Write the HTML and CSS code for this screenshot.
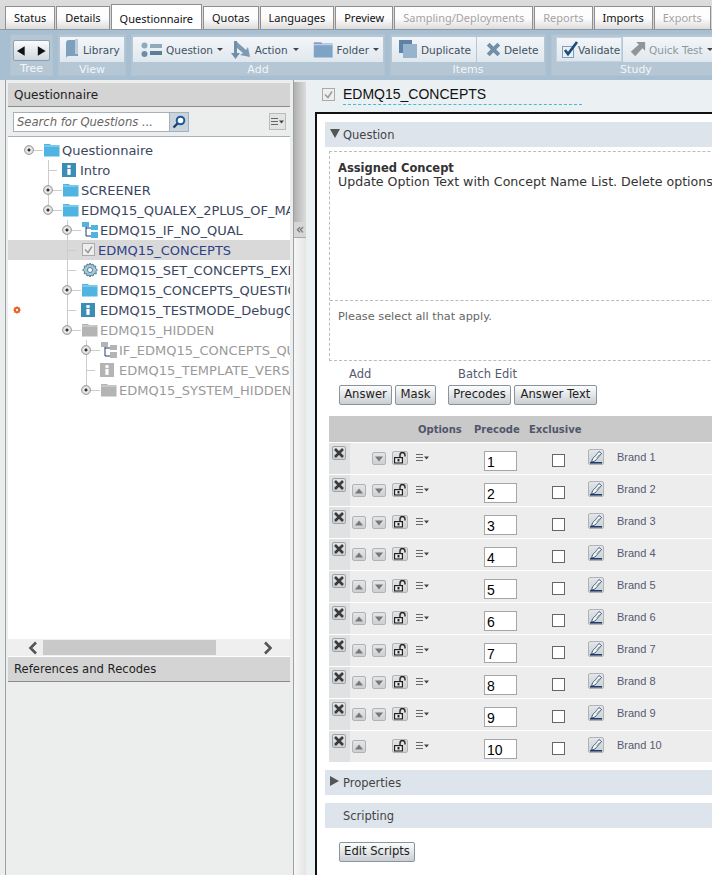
FILE: index.html
```html
<!DOCTYPE html>
<html lang="en">
<head>
    <meta charset="UTF-8">
    <meta name="viewport" content="width=device-width, initial-scale=1.0">
    <title>Questionnaire</title>
    <link rel="stylesheet" href="styles.css">
</head>
<body>
    <svg class="sprite" aria-hidden="true">
        <symbol id="i-folder" viewBox="0 0 16 14"><path d="M0 2V1h6l1 1h8.500v11.500H0z" fill="currentColor"/><path d="M0 3h15.500" stroke="#fff" stroke-opacity=".5"/></symbol>
        <symbol id="i-info" viewBox="0 0 13 13"><rect width="13" height="13" fill="currentColor"/><rect x="5" y="2" width="3" height="2.500" fill="#fff"/><rect x="5" y="5.500" width="3" height="5.500" fill="#fff"/></symbol>
        <symbol id="i-branch" viewBox="0 0 16 16"><path d="M0 0h7v5H0z" fill="currentColor"/><path d="M9 3h7v5H9zM9 10h7v6H9z" fill="currentColor"/><path d="M4 5v9h5M4 6h5" fill="none" stroke="#223a66"/></symbol>
        <symbol id="i-check" viewBox="0 0 14 14"><rect x=".5" y=".5" width="12" height="12" fill="#eee" stroke="#aaa"/><path d="M3 6.500l3 3 4-6" fill="none" stroke="#999" stroke-width="1.500"/></symbol>
        <symbol id="i-gear" viewBox="0 0 16 16"><path d="M8 1l1 2 2-1 .5 2.200 2.300-.2-.4 2.300L15.500 8l-1.600 1.500.4 2.300-2.300-.2L11 14l-2-1-1 2-1-2-2 1-.5-2.400-2.300.2.400-2.300L.5 8l2.100-1.700-.4-2.300 2.300.2L5 2l2 1z" fill="#a9c6d4" stroke="#4f7f96"/><circle cx="8" cy="8" r="2.500" fill="#fff" stroke="#4f7f96"/></symbol>
        <symbol id="i-up" viewBox="0 0 12 10"><path d="M2 7.500L6 2.500l4 5z" fill="#777"/></symbol>
        <symbol id="i-down" viewBox="0 0 12 10"><path d="M2 2.500L6 7.500l4-5z" fill="#777"/></symbol>
        <symbol id="i-lock" viewBox="0 0 14 12"><path d="M7 5V3a2.500 2.500 0 0 1 5 0v1.500" fill="none" stroke="#222" stroke-width="1.400"/><rect x="1" y="5" width="9" height="6.500" fill="#222"/><rect x="2.200" y="6.200" width="6.600" height="4.200" fill="#f4f4f4"/><rect x="4.500" y="7" width="2" height="2.500" fill="#222"/></symbol>
        <symbol id="i-menu" viewBox="0 0 13 10"><path d="M0 1.500h7M0 4.500h7M0 7.500h7" stroke="#666"/><path d="M8 3.500h5L10.500 6.500z" fill="#444"/></symbol>
        <symbol id="i-edit" viewBox="0 0 14 14"><path d="M3.500 9L10 1.500l2.500 2-6.500 7.500-3.500 1z" fill="#fff" stroke="#3f5f80"/><path d="M6 6.500l3-3.500M7.500 8l3-3.500" stroke="#8aa3b8"/><path d="M1 12.800h12" stroke="#17375e" stroke-width="1.500"/></symbol>
        <symbol id="i-x" viewBox="0 0 12 12"><path d="M2 2l8 8M10 2l-8 8" stroke="#3a3a3a" stroke-width="2.600"/></symbol>
        <symbol id="i-flag" viewBox="0 0 8 8"><path d="M4 0l1 1.200L6.800 1.200 6.800 3 8 4 6.800 5 6.800 6.800 5 6.800 4 8 3 6.800 1.200 6.800 1.200 5 0 4 1.200 3 1.200 1.200 3 1.200z" fill="#f0591c"/><circle cx="4" cy="4" r="1.200" fill="#fff"/></symbol>
    </svg>

    <nav class="tabs">
        <div class="tab">Status</div>
        <div class="tab">Details</div>
        <div class="tab active">Questionnaire</div>
        <div class="tab">Quotas</div>
        <div class="tab">Languages</div>
        <div class="tab">Preview</div>
        <div class="tab off">Sampling/Deployments</div>
        <div class="tab off">Reports</div>
        <div class="tab">Imports</div>
        <div class="tab off">Exports</div>
        <div class="tab off tab-last"></div>
    </nav>

    <div class="toolbar">
        <div class="group group-tree">
            <div class="tools">
                <div class="arrows">
                    <svg width="18" height="12" viewBox="0 0 18 12"><path d="M11 1v10L3 6z" fill="#111"/></svg>
                    <svg width="18" height="12" viewBox="0 0 18 12"><path d="M6 1v10l8-5z" fill="#111"/></svg>
                </div>
            </div>
            <div class="group-label">Tree</div>
        </div>
        <div class="group group-view">
            <div class="tools">
                <div class="tool">
                    <svg width="14" height="21" viewBox="0 0 14 21"><path d="M3 1h9v16H3q-3 0-3 3V4q0-3 3-3z" fill="#7ea0bd"/><path d="M9 0h3v15H9z" fill="#b9cddd"/></svg>
                    <span>Library</span>
                </div>
            </div>
            <div class="group-label">View</div>
        </div>
        <div class="group group-add">
            <div class="tools">
                <div class="tool tool-q">
                    <svg width="22" height="16" viewBox="0 0 22 16"><circle cx="3.500" cy="3.500" r="3" fill="#8fa9bf"/><circle cx="3.500" cy="12" r="3" fill="#6f8ca6"/><rect x="9" y="2" width="12" height="4" fill="#8fa9bf"/><rect x="9" y="9" width="12" height="4" fill="#5d7d99"/></svg>
                    <span>Question</span><i class="caret"></i>
                </div>
                <div class="tool tool-a">
                    <svg width="20" height="20" viewBox="0 0 20 20"><path d="M3 1h3v12h3l-4.500 6L0 13h3z" fill="#6f8fab"/><path d="M6 2l9 8 2-3 2 10-10-2 3-2-6-5z" fill="#7d9ab3"/></svg>
                    <span>Action</span><i class="caret"></i>
                </div>
                <div class="tool tool-f">
                    <svg class="tool-folder" width="21" height="17"><use href="#i-folder"/></svg>
                    <span>Folder</span><i class="caret"></i>
                </div>
            </div>
            <div class="group-label">Add</div>
        </div>
        <div class="group group-items">
            <div class="tools">
                <div class="tool tool-dup">
                    <svg width="19" height="19" viewBox="0 0 19 19"><rect x="0" y="0" width="13" height="13" fill="#5d84a8"/><rect x="4" y="4" width="14" height="14" fill="#97b4cc"/></svg>
                    <span>Duplicate</span>
                </div>
                <div class="tool tool-del">
                    <svg width="15" height="15" viewBox="0 0 17 17"><path d="M2.500 2.500l12 12M14.500 2.500l-12 12" stroke="#6f8fab" stroke-width="4.500"/></svg>
                    <span>Delete</span>
                </div>
            </div>
            <div class="group-label">Items</div>
        </div>
        <div class="group group-study">
            <div class="tools">
                <div class="tool tool-val">
                    <svg width="19" height="19" viewBox="0 0 19 19"><rect x="1.500" y="6.500" width="11" height="11" fill="#e8eff5" stroke="#7f9db7"/><path d="M4 10l3 4 9-12" fill="none" stroke="#1e4a7a" stroke-width="2.600"/></svg>
                    <span>Validate</span>
                </div>
                <div class="tool tool-off">
                    <svg width="17" height="17" viewBox="0 0 19 19"><path d="M8 1h10v10l-3-3-8 9-5-5 9-8z" fill="#8f9599"/></svg>
                    <span>Quick Test</span><i class="caret"></i>
                </div>
            </div>
            <div class="group-label">Study</div>
        </div>
    </div>

    <div class="main">
        <aside class="side">
            <div class="side-head">Questionnaire</div>
            <div class="search-row">
                <div class="search">
                    <div class="search-text">Search for Questions ...</div>
                    <div class="search-btn">
                        <svg width="14" height="14" viewBox="0 0 14 14"><circle cx="8.500" cy="5.500" r="3.800" fill="#fff" stroke="#1d5a9a" stroke-width="2"/><path d="M5.500 8.500L1.500 12.500" stroke="#1d3f6a" stroke-width="2.400"/></svg>
                    </div>
                </div>
                <div class="mini-menu"><svg width="13" height="10"><use href="#i-menu"/></svg></div>
            </div>
            <div class="tree">
                <div class="node lvl0"><i class="twist"></i><i class="dash"></i><svg class="ico blue" width="16" height="14"><use href="#i-folder"/></svg><span>Questionnaire</span></div>
                <div class="node lvl1 guide1"><i class="nest"></i><i class="dash"></i><svg class="ico info teal" width="14" height="14"><use href="#i-info"/></svg><span>Intro</span></div>
                <div class="node lvl1 guide1"><i class="twist"></i><i class="dash"></i><svg class="ico blue" width="16" height="14"><use href="#i-folder"/></svg><span>SCREENER</span></div>
                <div class="node lvl1 guide1-end"><i class="twist"></i><i class="dash"></i><svg class="ico blue" width="16" height="14"><use href="#i-folder"/></svg><span>EDMQ15_QUALEX_2PLUS_OF_MAIN</span></div>
                <div class="node lvl2 guide2"><i class="twist"></i><i class="dash"></i><svg class="ico blue" width="16" height="16"><use href="#i-branch"/></svg><span>EDMQ15_IF_NO_QUAL</span></div>
                <div class="node lvl2 guide2 selected"><i class="nest"></i><i class="dash"></i><svg class="ico" width="14" height="14"><use href="#i-check"/></svg><span>EDMQ15_CONCEPTS</span></div>
                <div class="node lvl2 guide2"><i class="nest"></i><i class="dash"></i><svg class="ico" width="16" height="16"><use href="#i-gear"/></svg><span>EDMQ15_SET_CONCEPTS_EXEC</span></div>
                <div class="node lvl2 guide2"><i class="twist"></i><i class="dash"></i><svg class="ico blue" width="16" height="14"><use href="#i-folder"/></svg><span>EDMQ15_CONCEPTS_QUESTIONS</span></div>
                <div class="node lvl2 guide2"><svg class="flag" width="8" height="8"><use href="#i-flag"/></svg><i class="nest"></i><i class="dash"></i><svg class="ico info teal" width="14" height="14"><use href="#i-info"/></svg><span>EDMQ15_TESTMODE_DebugCheck</span></div>
                <div class="node lvl2 guide2-end muted"><i class="twist"></i><i class="dash"></i><svg class="ico grey" width="16" height="14"><use href="#i-folder"/></svg><span>EDMQ15_HIDDEN</span></div>
                <div class="node lvl3 guide3 muted"><i class="twist"></i><i class="dash"></i><svg class="ico grey" width="16" height="16"><use href="#i-branch"/></svg><span>IF_EDMQ15_CONCEPTS_QUESTION</span></div>
                <div class="node lvl3 guide3 muted"><i class="nest"></i><i class="dash"></i><svg class="ico info grey" width="14" height="14"><use href="#i-info"/></svg><span>EDMQ15_TEMPLATE_VERSION</span></div>
                <div class="node lvl3 guide3-end muted"><i class="twist"></i><i class="dash"></i><svg class="ico grey" width="16" height="14"><use href="#i-folder"/></svg><span>EDMQ15_SYSTEM_HIDDEN</span></div>
            </div>
            <div class="hscroll">
                <svg width="12" height="14" viewBox="0 0 12 14"><path d="M9 1.500L3.500 7 9 12.500" fill="none" stroke="#555" stroke-width="2.600"/></svg>
                <div class="hscroll-track"><div class="hscroll-thumb"></div></div>
                <svg width="12" height="14" viewBox="0 0 12 14"><path d="M3 1.500L8.500 7 3 12.500" fill="none" stroke="#555" stroke-width="2.600"/></svg>
            </div>
            <div class="side-head side-refs">References and Recodes</div>
        </aside>

        <div class="splitter">
            <div class="split-top"></div>
            <div class="split-btn">«</div>
            <div class="split-rest"></div>
        </div>

        <section class="content">
            <div class="title-row">
                <svg width="14" height="14"><use href="#i-check"/></svg>
                <div class="title">EDMQ15_CONCEPTS</div>
            </div>
            <div class="panel">
                <div class="bar"><i class="tri-down"></i>Question</div>
                <div class="qbox">
                    <div class="qtext">
                        <b>Assigned Concept</b><br>
                        Update Option Text with Concept Name List. Delete options
                    </div>
                    <div class="qhint">Please select all that apply.</div>
                </div>

                <div class="btn-labels">
                    <span class="lbl-add">Add</span>
                    <span class="lbl-batch">Batch Edit</span>
                </div>
                <div class="btn-row">
                    <div class="btn btn-answer">Answer</div>
                    <div class="btn btn-mask">Mask</div>
                    <div class="btn btn-precodes">Precodes</div>
                    <div class="btn btn-text">Answer Text</div>
                </div>

                <div class="grid-head">
                    <span class="h-options">Options</span>
                    <span class="h-precode">Precode</span>
                    <span>Exclusive</span>
                </div>

                <div class="row">
                    <div class="cell-del"><div class="ibtn btn-x"><svg width="12" height="12"><use href="#i-x"/></svg></div></div>
                    <div class="slot"></div>
                    <div class="slot"><div class="ibtn"><svg width="12" height="10"><use href="#i-down"/></svg></div></div>
                    <div class="slot-lock"><div class="ibtn"><svg width="14" height="12"><use href="#i-lock"/></svg></div></div>
                    <div class="slot-menu"><svg width="13" height="10"><use href="#i-menu"/></svg></div>
                    <div class="precode">1</div>
                    <div class="check"></div>
                    <div class="slot-edit"><div class="ibtn"><svg width="14" height="14"><use href="#i-edit"/></svg></div></div>
                    <div class="brand">Brand 1</div>
                </div>
                <div class="row">
                    <div class="cell-del"><div class="ibtn btn-x"><svg width="12" height="12"><use href="#i-x"/></svg></div></div>
                    <div class="slot"><div class="ibtn"><svg width="12" height="10"><use href="#i-up"/></svg></div></div>
                    <div class="slot"><div class="ibtn"><svg width="12" height="10"><use href="#i-down"/></svg></div></div>
                    <div class="slot-lock"><div class="ibtn"><svg width="14" height="12"><use href="#i-lock"/></svg></div></div>
                    <div class="slot-menu"><svg width="13" height="10"><use href="#i-menu"/></svg></div>
                    <div class="precode">2</div>
                    <div class="check"></div>
                    <div class="slot-edit"><div class="ibtn"><svg width="14" height="14"><use href="#i-edit"/></svg></div></div>
                    <div class="brand">Brand 2</div>
                </div>
                <div class="row">
                    <div class="cell-del"><div class="ibtn btn-x"><svg width="12" height="12"><use href="#i-x"/></svg></div></div>
                    <div class="slot"><div class="ibtn"><svg width="12" height="10"><use href="#i-up"/></svg></div></div>
                    <div class="slot"><div class="ibtn"><svg width="12" height="10"><use href="#i-down"/></svg></div></div>
                    <div class="slot-lock"><div class="ibtn"><svg width="14" height="12"><use href="#i-lock"/></svg></div></div>
                    <div class="slot-menu"><svg width="13" height="10"><use href="#i-menu"/></svg></div>
                    <div class="precode">3</div>
                    <div class="check"></div>
                    <div class="slot-edit"><div class="ibtn"><svg width="14" height="14"><use href="#i-edit"/></svg></div></div>
                    <div class="brand">Brand 3</div>
                </div>
                <div class="row">
                    <div class="cell-del"><div class="ibtn btn-x"><svg width="12" height="12"><use href="#i-x"/></svg></div></div>
                    <div class="slot"><div class="ibtn"><svg width="12" height="10"><use href="#i-up"/></svg></div></div>
                    <div class="slot"><div class="ibtn"><svg width="12" height="10"><use href="#i-down"/></svg></div></div>
                    <div class="slot-lock"><div class="ibtn"><svg width="14" height="12"><use href="#i-lock"/></svg></div></div>
                    <div class="slot-menu"><svg width="13" height="10"><use href="#i-menu"/></svg></div>
                    <div class="precode">4</div>
                    <div class="check"></div>
                    <div class="slot-edit"><div class="ibtn"><svg width="14" height="14"><use href="#i-edit"/></svg></div></div>
                    <div class="brand">Brand 4</div>
                </div>
                <div class="row">
                    <div class="cell-del"><div class="ibtn btn-x"><svg width="12" height="12"><use href="#i-x"/></svg></div></div>
                    <div class="slot"><div class="ibtn"><svg width="12" height="10"><use href="#i-up"/></svg></div></div>
                    <div class="slot"><div class="ibtn"><svg width="12" height="10"><use href="#i-down"/></svg></div></div>
                    <div class="slot-lock"><div class="ibtn"><svg width="14" height="12"><use href="#i-lock"/></svg></div></div>
                    <div class="slot-menu"><svg width="13" height="10"><use href="#i-menu"/></svg></div>
                    <div class="precode">5</div>
                    <div class="check"></div>
                    <div class="slot-edit"><div class="ibtn"><svg width="14" height="14"><use href="#i-edit"/></svg></div></div>
                    <div class="brand">Brand 5</div>
                </div>
                <div class="row">
                    <div class="cell-del"><div class="ibtn btn-x"><svg width="12" height="12"><use href="#i-x"/></svg></div></div>
                    <div class="slot"><div class="ibtn"><svg width="12" height="10"><use href="#i-up"/></svg></div></div>
                    <div class="slot"><div class="ibtn"><svg width="12" height="10"><use href="#i-down"/></svg></div></div>
                    <div class="slot-lock"><div class="ibtn"><svg width="14" height="12"><use href="#i-lock"/></svg></div></div>
                    <div class="slot-menu"><svg width="13" height="10"><use href="#i-menu"/></svg></div>
                    <div class="precode">6</div>
                    <div class="check"></div>
                    <div class="slot-edit"><div class="ibtn"><svg width="14" height="14"><use href="#i-edit"/></svg></div></div>
                    <div class="brand">Brand 6</div>
                </div>
                <div class="row">
                    <div class="cell-del"><div class="ibtn btn-x"><svg width="12" height="12"><use href="#i-x"/></svg></div></div>
                    <div class="slot"><div class="ibtn"><svg width="12" height="10"><use href="#i-up"/></svg></div></div>
                    <div class="slot"><div class="ibtn"><svg width="12" height="10"><use href="#i-down"/></svg></div></div>
                    <div class="slot-lock"><div class="ibtn"><svg width="14" height="12"><use href="#i-lock"/></svg></div></div>
                    <div class="slot-menu"><svg width="13" height="10"><use href="#i-menu"/></svg></div>
                    <div class="precode">7</div>
                    <div class="check"></div>
                    <div class="slot-edit"><div class="ibtn"><svg width="14" height="14"><use href="#i-edit"/></svg></div></div>
                    <div class="brand">Brand 7</div>
                </div>
                <div class="row">
                    <div class="cell-del"><div class="ibtn btn-x"><svg width="12" height="12"><use href="#i-x"/></svg></div></div>
                    <div class="slot"><div class="ibtn"><svg width="12" height="10"><use href="#i-up"/></svg></div></div>
                    <div class="slot"><div class="ibtn"><svg width="12" height="10"><use href="#i-down"/></svg></div></div>
                    <div class="slot-lock"><div class="ibtn"><svg width="14" height="12"><use href="#i-lock"/></svg></div></div>
                    <div class="slot-menu"><svg width="13" height="10"><use href="#i-menu"/></svg></div>
                    <div class="precode">8</div>
                    <div class="check"></div>
                    <div class="slot-edit"><div class="ibtn"><svg width="14" height="14"><use href="#i-edit"/></svg></div></div>
                    <div class="brand">Brand 8</div>
                </div>
                <div class="row">
                    <div class="cell-del"><div class="ibtn btn-x"><svg width="12" height="12"><use href="#i-x"/></svg></div></div>
                    <div class="slot"><div class="ibtn"><svg width="12" height="10"><use href="#i-up"/></svg></div></div>
                    <div class="slot"><div class="ibtn"><svg width="12" height="10"><use href="#i-down"/></svg></div></div>
                    <div class="slot-lock"><div class="ibtn"><svg width="14" height="12"><use href="#i-lock"/></svg></div></div>
                    <div class="slot-menu"><svg width="13" height="10"><use href="#i-menu"/></svg></div>
                    <div class="precode">9</div>
                    <div class="check"></div>
                    <div class="slot-edit"><div class="ibtn"><svg width="14" height="14"><use href="#i-edit"/></svg></div></div>
                    <div class="brand">Brand 9</div>
                </div>
                <div class="row">
                    <div class="cell-del"><div class="ibtn btn-x"><svg width="12" height="12"><use href="#i-x"/></svg></div></div>
                    <div class="slot"><div class="ibtn"><svg width="12" height="10"><use href="#i-up"/></svg></div></div>
                    <div class="slot"></div>
                    <div class="slot-lock"><div class="ibtn"><svg width="14" height="12"><use href="#i-lock"/></svg></div></div>
                    <div class="slot-menu"><svg width="13" height="10"><use href="#i-menu"/></svg></div>
                    <div class="precode">10</div>
                    <div class="check"></div>
                    <div class="slot-edit"><div class="ibtn"><svg width="14" height="14"><use href="#i-edit"/></svg></div></div>
                    <div class="brand">Brand 10</div>
                </div>

                <div class="bar bar-props"><i class="tri-right"></i>Properties</div>
                <div class="bar bar-script">Scripting</div>
                <div class="btn btn-scripts">Edit Scripts</div>
            </div>
        </section>
    </div>
</body>
</html>
```

FILE: styles.css
```css
* {
    box-sizing: border-box;
}

html, body {
    margin: 0;
    height: 875px;
    overflow: hidden;
}

body {
    display: flex;
    flex-direction: column;
    width: 712px;
    font-family: "DejaVu Sans", Verdana, sans-serif;
    font-size: 12px;
    color: #222;
    background: #eceeee;
}

i {
    display: block;
}

.sprite {
    position: absolute;
    width: 0;
    height: 0;
}

/* tabs */
.tabs {
    display: flex;
    align-items: flex-end;
    gap: 1px;
    height: 30px;
    padding-left: 5px;
    overflow: hidden;
    background: linear-gradient(#dcdcdc, #d6d6d6);
    border-bottom: 1px solid #8d9aa5;
    flex: none;
}

.tab {
    height: 23px;
    padding: 3px 8px 0;
    font-family: "Noto Sans", sans-serif;
    font-size: 11px;
    line-height: 16px;
    white-space: nowrap;
    color: #111;
    background: linear-gradient(#fdfdfd 50%, #dcdcdc);
    border: 1px solid #8f8f8f;
    border-bottom: 0;
    flex: none;
}

.tab.active {
    height: 26px;
    margin-bottom: -1px;
    padding: 6px 8px 0;
    background: #fff;
}

.tab.off {
    color: #a3a3a3;
}

.tab-last {
    width: 10px;
}

/* toolbar */
.toolbar {
    display: flex;
    gap: 5px;
    height: 50px;
    padding: 4px 0 4px 10px;
    background: #a8bfd1;
    flex: none;
}

.group {
    display: flex;
    flex-direction: column;
    flex: none;
    background: #b5c7d5;
    border: 1px solid #b0c3d2;
}

.group-tree { width: 43px; }
.group-view { width: 68px; }
.group-add { width: 254px; }
.group-items { width: 156px; }
.group-study { width: 170px; }

.tools {
    display: flex;
    gap: 1px;
    height: 27px;
    padding: 2px 1px 0;
}

.group-add .tools {
    gap: 0;
}

.group-label {
    flex: 1;
    line-height: 15px;
    font-size: 11px;
    text-align: center;
    color: #f2f6f9;
}

.arrows {
    display: flex;
    align-items: center;
    justify-content: center;
    width: 37px;
    height: 21px;
    margin: 3px 0 0 1px;
    background: linear-gradient(#fafbfc, #cfd8e0);
    border: 1px solid #8ea0ae;
    border-radius: 2px;
}

.tool {
    display: flex;
    align-items: center;
    gap: 3px;
    height: 25px;
    padding: 0 4px 0 5px;
    font-size: 10.500px;
    font-weight: 500;
    color: #3f5161;
    white-space: nowrap;
    background: linear-gradient(#f3f6f9, #dfe7ee);
}

.tool svg {
    flex: none;
}

.group-view .tool { flex: 1; padding-left: 6px; }
.tool-q { width: 99px; padding-left: 8px; }
.tool-a { width: 79px; padding-left: 0; gap: 4px; }
.tool-f { flex: 1; padding-left: 4px; }
.tool-folder { color: #7fa3c4; }
.tool-dup { width: 84px; padding-left: 7px; }
.tool-del { flex: 1; padding-left: 9px; }
.tool-val { width: 66px; margin-left: 3px; padding-left: 4px; gap: 0; border: 1px solid #c6d3de; }
.tool-val span { margin-left: -2px; }
.tool-off { flex: 1; padding-left: 6px; color: #8d979f; }

.caret {
    width: 0;
    height: 0;
    margin-left: 1px;
    border: 3px solid transparent;
    border-top: 3px solid #444;
    border-bottom: 0;
}

/* main area */
.main {
    display: flex;
    flex: 1;
    min-height: 0;
}

.side {
    display: flex;
    flex-direction: column;
    flex: none;
    width: 289px;
    margin-left: 5px;
    padding: 3px 3px 0 2px;
    background: #eceeee;
    border-left: 1px solid #9aa0a5;
    border-right: 1px solid #9aa0a5;
    overflow: hidden;
}

.side-head {
    height: 24px;
    padding-left: 6px;
    font-size: 12px;
    line-height: 24px;
    color: #222;
    background: #d4d4d4;
    border-bottom: 1px solid #8a8a8a;
    flex: none;
}

.side-refs {
    height: 26px;
    font-size: 11.600px;
    line-height: 25px;
    border-top: 1px solid #fff;
}

.search-row {
    display: flex;
    align-items: center;
    height: 29px;
    padding: 0 3px 0 5px;
    flex: none;
}

.search {
    display: flex;
    width: 176px;
    height: 20px;
    background: #fff;
    border: 1px solid #a5b0b8;
}

.search-text {
    flex: 1;
    padding-left: 3px;
    font-size: 11.600px;
    font-style: italic;
    line-height: 18px;
    color: #666;
}

.search-btn {
    display: flex;
    align-items: center;
    justify-content: center;
    width: 19px;
    background: #c8d4de;
    border-left: 1px solid #a5b0b8;
}

.mini-menu {
    display: flex;
    align-items: center;
    justify-content: center;
    width: 17px;
    height: 17px;
    margin-left: auto;
    margin-right: 1px;
    background: #e2e4e4;
    border: 1px solid #bbb;
}

/* tree */
.tree {
    flex: none;
    height: 503px;
    padding-top: 3px;
    overflow: hidden;
    background: #fff;
    border-top: 1px solid #a5b0b8;
}

.node {
    position: relative;
    display: flex;
    align-items: center;
    height: 20px;
    font-size: 13px;
    white-space: nowrap;
    color: #3a4660;
    background-repeat: no-repeat;
}

.lvl0 { padding-left: 16px; }
.lvl1 { padding-left: 35px; }
.lvl2 { padding-left: 54px; }
.lvl3 { padding-left: 73px; }

.node .ico {
    flex: none;
    margin-right: 2px;
}

.node .info {
    margin-left: -1px;
    margin-right: 4px;
}

.lvl2 .info,
.lvl3 .info {
    margin-right: 5px;
}

.node span {
    flex: none;
}

.blue { color: #4fb4e2; }
.teal { color: #3b8db5; }
.grey { color: #b4b4b4; }

.muted {
    color: #9a9a9a;
}

.selected {
    color: #2f3f86;
    background-color: #d9d9d9;
}

/* guide lines sit at the centre of the parent's twist */
.guide1 { background: linear-gradient(#ccc, #ccc) 40px 0 / 1px 100% no-repeat; }
.guide1-end { background: linear-gradient(#ccc, #ccc) 40px 0 / 1px 50% no-repeat; }
.guide2 { background-image: linear-gradient(#ccc, #ccc); background-position: 59px 0; background-size: 1px 100%; }
.guide2-end { background-image: linear-gradient(#ccc, #ccc); background-position: 59px 0; background-size: 1px 50%; }
.guide3 { background-image: linear-gradient(#ccc, #ccc); background-position: 78px 0; background-size: 1px 100%; }
.guide3-end { background-image: linear-gradient(#ccc, #ccc); background-position: 78px 0; background-size: 1px 50%; }

.twist {
    flex: none;
    width: 10px;
    height: 10px;
    border: 1px solid #a0a0a0;
    border-radius: 50%;
    background: radial-gradient(circle, #333 0 1px, #f2f2f2 2px, #bbb 5px);
}

.nest {
    flex: none;
    width: 10px;
}

.dash {
    flex: none;
    width: 9px;
    height: 1px;
    margin-right: 1px;
    background: #ccc;
}

.node .nest + .dash {
    width: 8px;
    margin-left: -4px;
    margin-right: 6px;
}

.flag {
    position: absolute;
    left: 5px;
    top: 6px;
}

.hscroll {
    display: flex;
    align-items: center;
    height: 17px;
    padding: 0 16px 0 19px;
    background: #efefef;
    flex: none;
}

.hscroll svg {
    flex: none;
}

.hscroll-track {
    flex: 1;
    height: 15px;
    margin: 0 15px 0 4px;
}

.hscroll-thumb {
    width: 173px;
    height: 100%;
    background: #c9c9c9;
}

/* splitter */
.splitter {
    display: flex;
    flex-direction: column;
    flex: none;
    width: 12px;
}

.split-top {
    height: 140px;
    margin-top: 2px;
    background: linear-gradient(90deg, #b0b0b0, #dcdcdc);
}

.split-btn {
    height: 16px;
    font-size: 14px;
    line-height: 14px;
    text-align: center;
    color: #666;
    background: #d6d6d6;
    border-bottom: 1px solid #aaa;
}

.split-rest {
    flex: 1;
    background: linear-gradient(90deg, #f6f6f6, #e4e4e4);
}

/* right pane */
.content {
    flex: 1;
    min-width: 0;
    padding: 2px 0 0 9px;
    overflow: hidden;
    background: #ebf0f3;
}

.title-row {
    display: flex;
    align-items: center;
    gap: 7px;
    height: 30px;
    padding: 0 0 4px 7px;
}

.title {
    width: 239px;
    height: 20px;
    font-family: "Liberation Sans", Arial, sans-serif;
    font-size: 14px;
    line-height: 18px;
    color: #111;
    border-bottom: 1px dashed #45b8dd;
}

.panel {
    width: 500px;
    height: 800px;
    padding: 8px 0 0 8px;
    background: #fff;
    border-left: 2px solid #111;
    border-top: 2px solid #111;
}

.bar {
    display: flex;
    align-items: center;
    height: 25px;
    font-size: 11.500px;
    color: #444;
    background: #dde4eb;
}

.tri-down {
    width: 0;
    height: 0;
    margin: -3px 3px 0 5px;
    border: 5px solid transparent;
    border-top: 9px solid #555;
    border-bottom: 0;
}

.tri-right {
    width: 0;
    height: 0;
    margin: -3px 4px 0 5px;
    border: 5px solid transparent;
    border-left: 9px solid #555;
    border-right: 0;
}

.qbox {
    height: 210px;
    margin: 4px 0 0 4px;
    border: 1px dashed #bbb;
    border-right: 0;
}

.qtext {
    height: 149px;
    padding: 9px 0 0 8px;
    font-size: 12.600px;
    line-height: 14px;
    white-space: nowrap;
    color: #333;
    border-bottom: 1px dashed #bbb;
}

.qtext b {
    font-size: 11.500px;
}

.qhint {
    padding: 9px 0 0 8px;
    font-size: 11.300px;
    color: #666;
}

.btn-labels {
    display: flex;
    height: 19px;
    padding-top: 6px;
    font-size: 11.500px;
    line-height: 14px;
    color: #555a70;
}

.lbl-add { margin-left: 24px; width: 109px; }

.btn-row {
    display: flex;
    gap: 3px;
    margin: 5px 0 0 14px;
}

.btn {
    height: 20px;
    font-size: 11.600px;
    line-height: 17px;
    text-align: center;
    white-space: nowrap;
    color: #222;
    background: linear-gradient(#fdfdfd, #c9ced3);
    border: 1px solid #8a949c;
    border-radius: 2px;
}

.btn-answer { width: 53px; }
.btn-mask { width: 41px; margin-right: 9px; }
.btn-precodes { width: 63px; }
.btn-text { width: 83px; }

.grid-head {
    display: flex;
    align-items: center;
    width: 100%;
    height: 26px;
    margin: 11px 0 1px 4px;
    padding-left: 89px;
    font-size: 10px;
    font-weight: bold;
    color: #50556c;
    background: #c9c9c9;
}

.h-options { width: 56px; }
.h-precode { width: 55px; }

.row {
    display: flex;
    align-items: flex-start;
    height: 31px;
    margin: 0 0 1px 4px;
    background: #ededed;
}

.cell-del {
    width: 21px;
    height: 100%;
    padding: 3px 0 0 3px;
    background: #dfe1e2;
    flex: none;
}

.ibtn {
    display: flex;
    align-items: center;
    justify-content: center;
    width: 14px;
    height: 13px;
    background: linear-gradient(#e4e5e6, #cdd0d2);
    border: 1px solid #b0b4b8;
    border-radius: 2px;
}

.btn-x {
    height: 14px;
    border-color: #9ea3a8;
}

.slot {
    width: 20px;
    padding: 9px 0 0 2px;
    flex: none;
}

.slot-lock {
    width: 26px;
    padding: 8px 0 0 2px;
    flex: none;
}

.slot-lock .ibtn {
    width: 16px;
    height: 14px;
}

.slot-menu {
    width: 68px;
    padding-top: 10px;
    flex: none;
}

.slot-menu svg {
    display: block;
}

.precode {
    width: 33px;
    height: 20px;
    margin-top: 8px;
    padding-left: 2px;
    font-family: "Liberation Sans", Arial, sans-serif;
    font-size: 14px;
    line-height: 20px;
    color: #000;
    background: #fff;
    border: 1px solid #a0a8ae;
    flex: none;
}

.check {
    width: 13px;
    height: 13px;
    margin: 11px 23px 0 35px;
    background: #fff;
    border: 1px solid #666;
    flex: none;
}

.slot-edit {
    width: 29px;
    padding-top: 6px;
    flex: none;
}

.slot-edit .ibtn {
    width: 16px;
    height: 16px;
}

.brand {
    margin-top: 7px;
    font-family: "Liberation Sans", Arial, sans-serif;
    font-size: 11px;
    line-height: 14px;
    color: #555a70;
}

.bar-props {
    margin-top: 8px;
}

.bar-script {
    margin-top: 8px;
    padding-left: 18px;
}

.btn-scripts {
    width: 76px;
    margin: 14px 0 0 14px;
}
```
